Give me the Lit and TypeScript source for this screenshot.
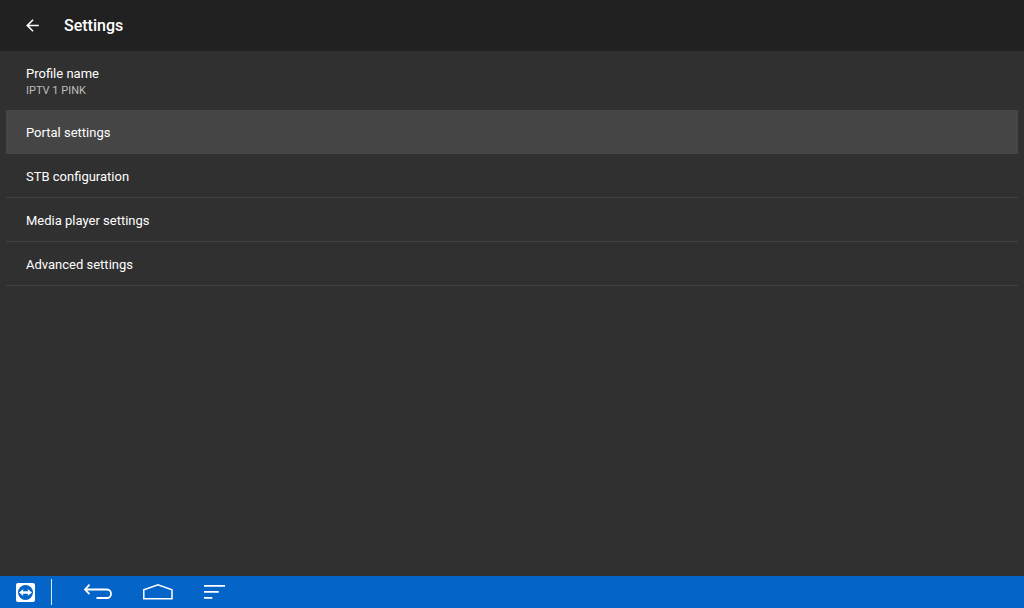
import { LitElement, html, css, svg } from "lit";
import { customElement, property } from "lit/decorators.js";
import { classMap } from "lit/directives/class-map.js";

interface SettingsEntry {
  title: string;
  summary?: string;
  selected?: boolean;
}

const ENTRIES: SettingsEntry[] = [
  { title: "Profile name", summary: "IPTV 1 PINK" },
  { title: "Portal settings", selected: true },
  { title: "STB configuration" },
  { title: "Media player settings" },
  { title: "Advanced settings" },
];

@customElement("settings-list")
class SettingsList extends LitElement {
  @property({ attribute: false }) entries: SettingsEntry[] = [];

  static styles = css`
    :host {
      display: block;
    }
    .list {
      list-style: none;
      margin: 0;
      padding: 0 6px;
    }
    .row {
      box-sizing: border-box;
      display: flex;
      flex-direction: column;
      justify-content: center;
      width: 100%;
      min-height: 44px;
      margin: 0;
      padding: 2px 20px 0;
      border: 0;
      border-bottom: 1px solid #414141;
      background: transparent;
      color: #fff;
      font: inherit;
      font-size: 13px;
      line-height: 18px;
      text-align: left;
    }
    .tall {
      min-height: 59px;
      padding-top: 4px;
      border-bottom-color: transparent;
    }
    .selected {
      background: #454545;
      border-bottom-color: #454545;
    }
    .summary {
      color: #bdbdbd;
      font-size: 11px;
      line-height: 16px;
    }
  `;

  render() {
    return html`<ul class="list">
      ${this.entries.map(
        (e) => html`<li>
          <button
            type="button"
            class=${classMap({ row: true, tall: !!e.summary, selected: !!e.selected })}
          >
            <span>${e.title}</span>
            ${e.summary ? html`<span class="summary">${e.summary}</span>` : null}
          </button>
        </li>`
      )}
    </ul>`;
  }
}

@customElement("system-bar")
class SystemBar extends LitElement {
  static styles = css`
    :host {
      display: flex;
      align-items: center;
      height: 32px;
      background: #0564c8;
      color: #fff;
    }
    .btn {
      display: flex;
      align-items: center;
      justify-content: center;
      height: 32px;
      margin: 0;
      padding: 0;
      border: 0;
      background: transparent;
      color: inherit;
    }
    .remote {
      width: 51px;
    }
    .nav {
      display: flex;
      padding-left: 16px;
    }
    .nav .btn {
      width: 60px;
    }
    .divider {
      width: 1px;
      height: 26px;
      background: #dbe8f7;
    }
  `;

  render() {
    const line = (shape: unknown) => svg`<g fill="none" stroke="currentColor">${shape}</g>`;
    return html`
      <button type="button" class="btn remote" aria-label="Remote control">
        <svg width="19" height="19" viewBox="0 0 19 19">
          <rect width="19" height="19" rx="2" fill="#fff" />
          <circle cx="9.5" cy="9.5" r="7.5" fill="#0564c8" />
          <path d="M3 9.5 7.4 6 6.9 8.2H12.1L11.6 6 16 9.5 11.6 13 12.1 10.8H6.9L7.4 13Z" fill="#fff" />
        </svg>
      </button>
      <span class="divider"></span>
      <nav class="nav">
        <button type="button" class="btn" aria-label="Back">
          <svg width="30" height="18" viewBox="0 0 30 18">
            ${line(svg`<path stroke-width="1.8" d="M6.5 1.6 2 6.5l4.5 4.7M2 6.5h21.8a4.2 4.2 0 0 1 0 8.5H13.5" />`)}
          </svg>
        </button>
        <button type="button" class="btn" aria-label="Home">
          <svg width="30" height="18" viewBox="0 0 30 18">
            ${line(svg`<path stroke-width="1.5" d="M.8 15.7V6.8L15 1.9 29 6.8V15.7Z" />`)}
          </svg>
        </button>
        <button type="button" class="btn" aria-label="Recent apps">
          <svg width="30" height="18" viewBox="0 0 30 18">
            ${line(svg`<path stroke-width="1.7" d="M1 2.8H22M1 8.8H15.8M1 14.8H9.3" />`)}
          </svg>
        </button>
      </nav>
    `;
  }
}

@customElement("app-root")
class AppRoot extends LitElement {
  static styles = css`
    :host {
      display: flex;
      flex-direction: column;
      min-height: 100vh;
      background: #303030;
      color: #fff;
      font-family: Roboto, "Liberation Sans", sans-serif;
    }
    .header {
      display: flex;
      align-items: center;
      height: 51px;
      background: #212121;
    }
    .back {
      display: flex;
      align-items: center;
      justify-content: center;
      width: 64px;
      height: 51px;
      margin: 0;
      padding: 0;
      border: 0;
      background: transparent;
      color: inherit;
    }
    .title {
      margin: 0;
      font-size: 16px;
      font-weight: 500;
      line-height: 21px;
    }
    .content {
      flex: 1;
    }
  `;

  render() {
    return html`
      <header class="header">
        <button type="button" class="back" aria-label="Navigate up">
          <svg width="19" height="19" viewBox="0 0 24 24" fill="currentColor">
            <path d="M20 11H7.83l5.59-5.59L12 4l-8 8 8 8 1.41-1.41L7.83 13H20v-2z" />
          </svg>
        </button>
        <h1 class="title">Settings</h1>
      </header>
      <main class="content">
        <settings-list .entries=${ENTRIES}></settings-list>
      </main>
      <system-bar></system-bar>
    `;
  }
}
